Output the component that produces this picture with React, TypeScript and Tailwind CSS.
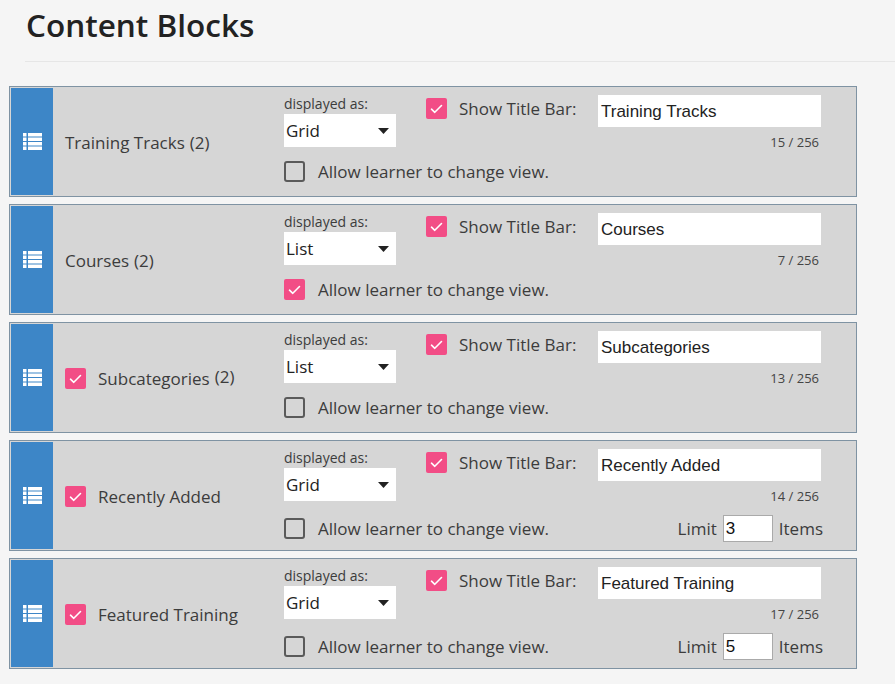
import React from "react";

type Block = {
  name: string;
  count?: string;
  hasCheck: boolean;
  display: string;
  allow: boolean;
  title: string;
  counter: string;
  limit?: string;
};

const blocks: Block[] = [
  { name: "Training Tracks", count: "(2)", hasCheck: false, display: "Grid", allow: false, title: "Training Tracks", counter: "15 / 256" },
  { name: "Courses", count: "(2)", hasCheck: false, display: "List", allow: true, title: "Courses", counter: "7 / 256" },
  { name: "Subcategories", count: "(2)", hasCheck: true, display: "List", allow: false, title: "Subcategories", counter: "13 / 256" },
  { name: "Recently Added", hasCheck: true, display: "Grid", allow: false, title: "Recently Added", counter: "14 / 256", limit: "3" },
  { name: "Featured Training", hasCheck: true, display: "Grid", allow: false, title: "Featured Training", counter: "17 / 256", limit: "5" },
];

const UI = { fontFamily: '"Segoe UI", "Open Sans", "Noto Sans", sans-serif' };
const ARIAL = { fontFamily: '"Liberation Sans", Arial, sans-serif' };

function Check({ checked }: { checked: boolean }) {
  if (checked) {
    return (
      <span className="flex h-[21px] w-[21px] shrink-0 items-center justify-center rounded-[2px] bg-[#f24d86]">
        <svg width="13" height="10" viewBox="0 0 13 10" fill="none">
          <path d="M1.5 5.2 L4.8 8.3 L11.5 1.5" stroke="white" strokeWidth="1.6" strokeLinecap="round" strokeLinejoin="round" />
        </svg>
      </span>
    );
  }
  return <span className="block h-[21px] w-[21px] shrink-0 rounded-[3px] border-2 border-[#5a5a5a]" />;
}

function ListIcon() {
  return (
    <svg width="19" height="17" viewBox="0 0 19 17" fill="white">
      {[0, 4.5, 9, 13.5].map((y) => (
        <g key={y}>
          <rect x="0" y={y} width="3.5" height="3.5" />
          <rect x="5" y={y} width="14" height="3.5" />
        </g>
      ))}
    </svg>
  );
}

function Row({ b }: { b: Block }) {
  return (
    <div className="flex h-[111px] border border-[#7f93a3] bg-[#d6d6d6] p-px">
      <div className="flex w-[42px] shrink-0 items-center justify-center bg-[#3d86c7]">
        <ListIcon />
      </div>
      <div className="flex w-[231px] shrink-0 items-center gap-3 pl-3 pt-[2px] text-[17px] text-[#3c3c3c]" style={UI}>
        {b.hasCheck && <Check checked />}
        <span>
          {b.name}
          {b.count && <span className={b.hasCheck ? "relative -top-[2px] ml-[5px]" : "ml-[5px]"}>{b.count}</span>}
        </span>
      </div>
      <div className="flex w-[539px] flex-col pt-[7px] text-[#3c3c3c]" style={UI}>
        <div className="flex items-start">
          <div className="w-[112px] shrink-0">
            <div className="h-[19px] text-[14px] leading-[17px]">displayed as:</div>
            <div className="flex h-[33px] items-center justify-between bg-white pl-[2px] pr-[7px] text-[17px] text-[#222]">
              <span>{b.display}</span>
              <svg width="11" height="6" viewBox="0 0 11 6">
                <path d="M0 0 L11 0 L5.5 6 Z" fill="#222" />
              </svg>
            </div>
          </div>
          <div className="ml-[30px] flex w-[172px] shrink-0 items-center gap-3 pt-[3px] text-[17px]">
            <Check checked />
            <span className="leading-[21px]">Show Title Bar:</span>
          </div>
          <div className="w-[223px] shrink-0">
            <div className="flex h-[32px] items-center bg-white pl-[3px] pt-[2px] text-[17px] text-[#222]" style={ARIAL}>
              {b.title}
            </div>
            <div className="mt-[7px] pr-[2px] text-right text-[13px] leading-[16px] text-[#444]">{b.counter}</div>
          </div>
        </div>
        <div className="mt-[11px] flex items-center justify-between">
          <div className="flex items-center gap-[13px] text-[17px]">
            <Check checked={b.allow} />
            <span className="leading-[21px]">Allow learner to change view.</span>
          </div>
          {b.limit && (
            <div className="flex items-center text-[17px]">
              <span>Limit</span>
              <span
                className="ml-[6px] flex h-[27px] w-[50px] items-center border border-[#aaa] bg-white pl-[2px] text-[17px] text-[#111]"
                style={ARIAL}
              >
                {b.limit}
              </span>
              <span className="ml-[6px]">Items</span>
            </div>
          )}
        </div>
      </div>
    </div>
  );
}

export default function App() {
  return (
    <div className="min-h-[684px] w-[895px] bg-[#f5f5f5]" style={UI}>
      <div className="pl-[26px] pt-[4px]">
        <h1 className="text-[31.5px] font-semibold leading-[42px] text-[#222]">Content Blocks</h1>
      </div>
      <div className="ml-[25px] mt-[15px] h-px bg-[#e6e6e6]" />
      <div className="ml-[9px] mt-[24px] flex w-[848px] flex-col gap-[7px]">
        {blocks.map((b) => (
          <Row key={b.name} b={b} />
        ))}
      </div>
    </div>
  );
}
